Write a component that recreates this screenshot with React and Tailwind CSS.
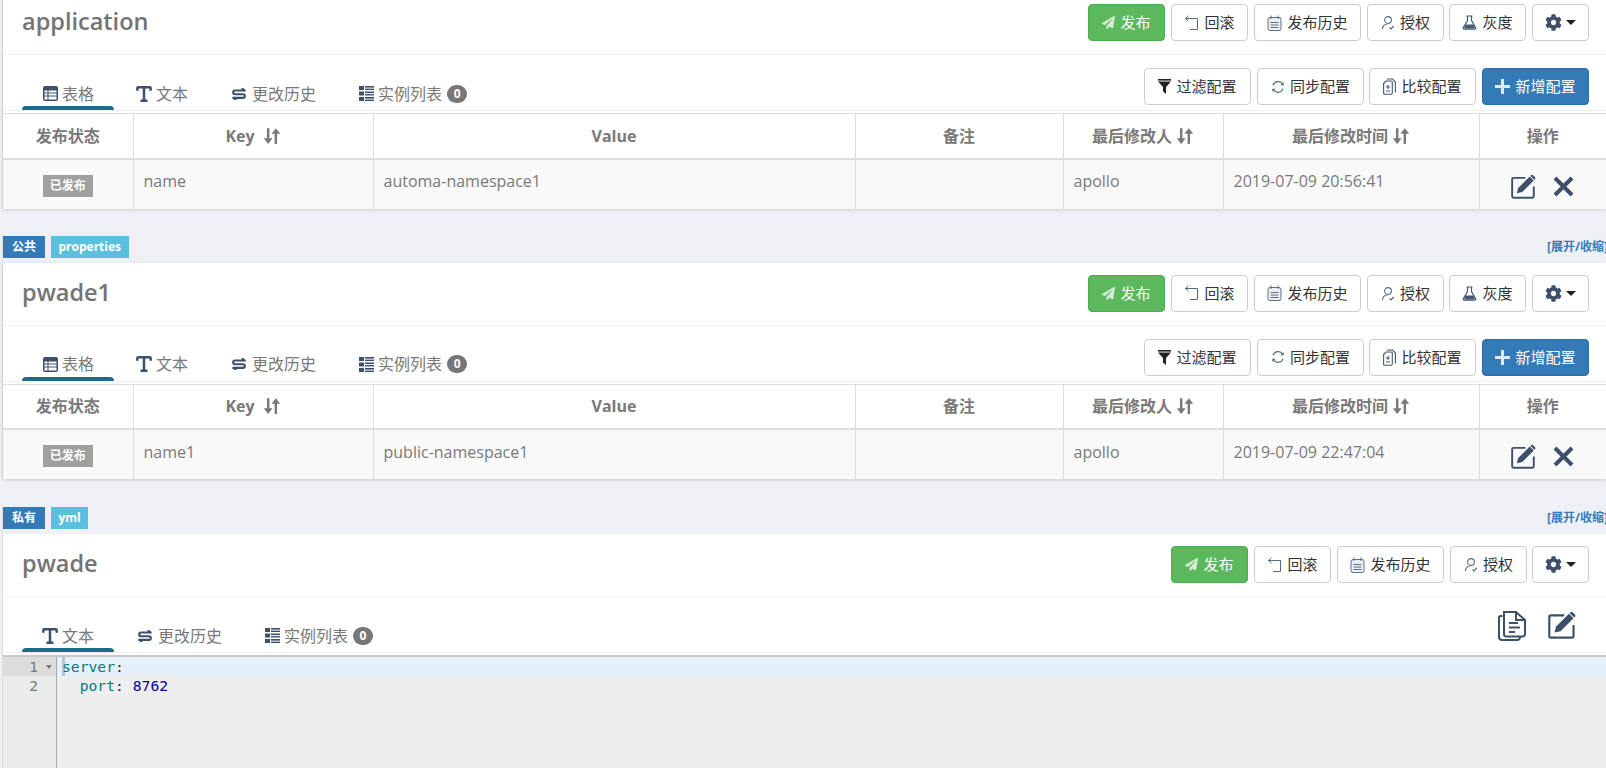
import { FaPaperPlane, FaCog } from 'react-icons/fa';
import { Type } from 'lucide-react';

// Bootstrap 3 glyphs that the icon packages don't carry in the same shape
const RollbackIcon = () => (
  <svg width="15" height="16" viewBox="0 0 15 16" fill="none" stroke="#55697f" strokeWidth="1">
    <path d="M1.5 3.500H13.500V14.500H6" />
    <path d="M4.500 .8L1.500 3.500L4.500 6.200" />
  </svg>
);

const HistoryIcon = () => (
  <svg width="15" height="16" viewBox="0 0 15 16" fill="#edf0f4" stroke="#5d6f84" strokeWidth="1">
    <rect x="1" y="2.500" width="13" height="13" rx="2" />
    <path d="M4 .5V4M11 .5V4M3.500 7.500H11.500M3.500 10H11.500M3.500 12.500H11.500" fill="none" />
  </svg>
);

const AuthIcon = () => (
  <svg width="14" height="15" viewBox="0 0 14 15" fill="none" stroke="#55697f" strokeWidth="1.100">
    <circle cx="7" cy="5" r="3.400" />
    <path d="M1.500 14C1.500 11 3.500 9 6.500 9" />
    <path d="M8.500 12.500L10 14L12.800 11" />
  </svg>
);

const FlaskIcon = () => (
  <svg width="15" height="15" viewBox="0 0 15 15" fill="none" stroke="#45586f" strokeWidth="1.200">
    <path d="M4.500 1H10.500M5.500 1V5.500L1.400 12.500C1 13.400 1.400 14.200 2.400 14.200H12.600C13.600 14.200 14 13.400 13.600 12.500L9.500 5.500V1" />
    <path d="M3.500 9.500H11.500L13 13.500H2Z" fill="#45586f" stroke="none" />
  </svg>
);

const FilterIcon = () => (
  <svg width="13" height="15" viewBox="0 0 13 15" fill="#222">
    <rect x="0" y="0" width="13" height="1.600" />
    <path d="M0 2.600H13L8 8V15L5 12.500V8Z" />
  </svg>
);

const SyncIcon = () => (
  <svg width="14" height="14" viewBox="0 0 14 14" fill="none" stroke="#5d6f84" strokeWidth="1.100">
    <path d="M2 5.200A5.400 5.400 0 0 1 11.800 4.400" />
    <path d="M12 8.800A5.400 5.400 0 0 1 2.200 9.600" />
    <path d="M10 4.600H12.200V2.400" />
    <path d="M4 9.400H1.800V11.600" />
  </svg>
);

const CompareIcon = () => (
  <svg width="13" height="17" viewBox="0 0 13 17" fill="none" stroke="#45586f" strokeWidth="1.100">
    <path d="M4 1H9.500L12.400 4V14.500" />
    <path d="M.6 5.500L3 3H8.200C8.800 3 9.300 3.500 9.300 4V15C9.300 15.600 8.800 16.200 8.200 16.200H1.700C1 16.200 .6 15.600 .6 15Z" fill="#fff" />
    <path d="M5 7V11M3 9H7M3 13H7" />
  </svg>
);

const PlusIcon = () => (
  <svg width="15" height="15" viewBox="0 0 15 15" fill="#dfe9f3">
    <rect x="6" y="0" width="3" height="15" />
    <rect x="0" y="6" width="15" height="3" />
  </svg>
);

const TableIcon = () => (
  <svg width="15" height="15" viewBox="0 0 15 15" fill="#3e5069">
    <path d="M2 0H13A2 2 0 0 1 15 2V13A2 2 0 0 1 13 15H2A2 2 0 0 1 0 13V2A2 2 0 0 1 2 0Z" />
    <path d="M1.500 4.500H4.500V6.500H1.500ZM5.500 4.500H13.500V6.500H5.500ZM1.500 7.500H4.500V9.500H1.500ZM5.500 7.500H13.500V9.500H5.500ZM1.500 10.500H4.500V13.500H1.500ZM5.500 10.500H13.500V13.500H5.500Z" fill="#fff" />
  </svg>
);

const TransferIcon = () => (
  <svg width="14" height="12" viewBox="0 0 14 12" fill="none" stroke="#3e5069" strokeWidth="2.100" strokeLinecap="round">
    <path d="M12.500 2.500H3A1.800 1.800 0 0 0 3 6.200H11A1.800 1.800 0 0 1 11 9.900H1.500" />
    <path d="M10.500 .8L12.500 2.500M3.500 11.400L1.500 9.900" />
  </svg>
);

const InstanceIcon = () => (
  <svg width="15" height="15" viewBox="0 0 15 15" fill="#3e5069">
    <rect x="0" y="0" width="5" height="4" />
    <rect x="0" y="5.500" width="5" height="4" />
    <rect x="0" y="11" width="5" height="4" />
    <rect x="6" y="0" width="9" height="1.600" />
    <rect x="6" y="2.600" width="9" height="1.400" />
    <rect x="6" y="5.500" width="9" height="1.600" />
    <rect x="6" y="8.100" width="9" height="1.400" />
    <rect x="6" y="11" width="9" height="1.600" />
    <rect x="6" y="13.600" width="9" height="1.400" />
  </svg>
);

const SortIcon = () => (
  <svg width="18" height="18" viewBox="0 0 16 16" fill="#797979">
    <path d="M3.500 1H5.700V10H8.500L4.600 15L.7 10H3.500Z" />
    <path d="M10.300 15H12.500V6H15.300L11.400 1L7.500 6H10.300Z" />
  </svg>
);

const EditIcon = ({ size = 25 }) => (
  <svg width={size} height={size} viewBox="0 0 26 26" fill="none">
    <path d="M23.700 13V23.200C23.700 24 23.200 24.700 22.400 24.700H2.600C1.800 24.700 1.200 24 1.200 23.200V5.400C1.200 4.600 1.800 4 2.600 4H15" stroke="#3e5069" strokeWidth="2" />
    <path d="M6 20L7.500 14.500L19.500 2.500L23.700 6.700L11.700 18.700Z" fill="#3e5069" />
    <path d="M20.700 1.300C21.400 .6 22.300 .6 23 1.300L25 3.300C25.600 4 25.600 4.800 25 5.500L24.400 6L20 1.800Z" fill="#3e5069" />
  </svg>
);

const RemoveIcon = () => (
  <svg width="21" height="21" viewBox="0 0 21 21" stroke="#3e5069" strokeWidth="4" fill="none">
    <path d="M2 2L19 19M19 2L2 19" />
  </svg>
);

const FilesIcon = () => (
  <svg width="28" height="30" viewBox="0 0 28 30" fill="none" stroke="#3e5069" strokeWidth="2">
    <path d="M4.500 5H3A2 2 0 0 0 1 7V26A3 3 0 0 0 4 29H19A3 3 0 0 0 22 26V25.500" />
    <path d="M6 1H18L27 9V23A2.500 2.500 0 0 1 24.500 25.500H8.500A2.500 2.500 0 0 1 6 23Z" />
    <path d="M18 1V9H27" />
    <path d="M11 12H20M11 16.500H22M11 21H17" strokeWidth="1.800" />
  </svg>
);

const Btn = ({ icon, children, className }) => (
  <button className={`h-[37px] flex items-center justify-center gap-[5px] rounded border text-[15px] ${className}`}>
    {icon}
    <span>{children}</span>
  </button>
);

const plain = 'border-[#ccc] bg-white text-[#333]';

function PanelHeader({ title, gray }) {
  return (
    <div className="h-[63px] pt-3 pl-[19px] pr-[17px] flex justify-between border-b border-[#f0f1f6]">
      <div className="text-[23.5px] font-semibold text-[#747474] leading-[34px]">{title}</div>
      <div className="flex gap-1.5">
        <Btn
          className="w-[77px] bg-[#5cb85c] border-[#4cae4c] text-white"
          icon={<FaPaperPlane className="text-[13px] text-[#d5ecd5]" />}
        >
          发布
        </Btn>
        <Btn className={`w-[77px] ${plain}`} icon={<RollbackIcon />}>回滚</Btn>
        <Btn className={`w-[107px] ${plain}`} icon={<HistoryIcon />}>发布历史</Btn>
        <Btn className={`w-[77px] ${plain}`} icon={<AuthIcon />}>授权</Btn>
        {gray && <Btn className={`w-[77px] -ml-px ${plain}`} icon={<FlaskIcon />}>灰度</Btn>}
        <button className={`h-[37px] w-[57px] flex items-center justify-center gap-1 rounded border ${gray ? '' : '-ml-px'} ${plain}`}>
          <FaCog className="text-[17px] text-[#3e5069]" />
          <span className="w-0 h-0 border-x-[5px] border-x-transparent border-t-[5px] border-t-[#222]" />
        </button>
      </div>
    </div>
  );
}

// icons sit in a fixed box so the tab widths stay the same whatever the glyph is
const Tab = ({ icon, children, active, badge, wideIcon }) => (
  <div className="relative mr-0.5 px-5 h-[33px] flex items-center gap-1 text-base text-[#797979]">
    <span className={`h-4 flex items-center justify-center ${wideIcon ? 'w-[18px]' : 'w-4'}`}>{icon}</span>
    <span>{children}</span>
    {badge && (
      <span className="ml-px w-5 h-[18px] rounded-full bg-[#777] text-white text-xs font-bold flex items-center justify-center">
        0
      </span>
    )}
    {active && (
      <span className="absolute left-0 right-0 bottom-0 h-1 bg-[#1a6d87] rounded-t-sm" />
    )}
  </div>
);

const TextIcon = () => <Type size={20} strokeWidth={3} color="#3e5069" className="shrink-0" />;

function Tabs({ withTable }) {
  return (
    <div className="flex items-end pl-[19px]">
      {withTable && <Tab active icon={<TableIcon />}>表格</Tab>}
      <Tab active={!withTable} icon={<TextIcon />}>文本</Tab>
      <Tab wideIcon icon={<TransferIcon />}>更改历史</Tab>
      <Tab icon={<InstanceIcon />} badge>实例列表</Tab>
    </div>
  );
}

const Th = ({ children, sort, sortGap }) => (
  <th className="border-r border-b-2 border-[#ddd] font-bold text-base text-[#797979] text-center last:border-r-0">
    <span className={`inline-flex items-center justify-center ${sortGap ? 'gap-2' : 'gap-1'}`}>
      {children}
      {sort && <SortIcon />}
    </span>
  </th>
);

const Td = ({ children, className }) => (
  <td className={`border-r border-[#ddd] px-2.5 text-base text-[#797979] last:border-r-0 ${className || ''}`}>{children}</td>
);

function ConfigTable({ name, value, time }) {
  return (
    <table className="w-full table-fixed border-collapse border-t border-[#ddd] bg-white">
      <colgroup>
        <col className="w-[130px]" />
        <col className="w-[240px]" />
        <col className="w-[482px]" />
        <col className="w-[208px]" />
        <col className="w-[160px]" />
        <col className="w-[256px]" />
        <col />
      </colgroup>
      <thead>
        <tr className="h-[45px]">
          <Th>发布状态</Th>
          <Th sort sortGap>Key</Th>
          <Th>Value</Th>
          <Th>备注</Th>
          <Th sort>最后修改人</Th>
          <Th sort>最后修改时间</Th>
          <Th>操作</Th>
        </tr>
      </thead>
      <tbody>
        <tr className="h-[50px] bg-[#f9f9f9]">
          <Td className="text-center">
            <span className="inline-flex items-center justify-center w-[50px] h-[22px] bg-[#a0a0a0] text-white text-xs font-bold">
              已发布
            </span>
          </Td>
          <Td className="pb-1.5">{name}</Td>
          <Td className="pb-1.5">{value}</Td>
          <Td />
          <Td className="pb-1.5">apollo</Td>
          <Td className="pb-1.5">{time}</Td>
          <Td>
            <div className="flex items-center justify-center gap-[17px] pt-1">
              <EditIcon />
              <RemoveIcon />
            </div>
          </Td>
        </tr>
      </tbody>
    </table>
  );
}

function TableToolbar() {
  return (
    <div className="flex gap-1.5 pt-[13px] h-[50px]">
      <Btn className={`w-[107px] ${plain}`} icon={<FilterIcon />}>过滤配置</Btn>
      <Btn className={`w-[107px] ${plain}`} icon={<SyncIcon />}>同步配置</Btn>
      <Btn className={`w-[107px] -ml-px ${plain}`} icon={<CompareIcon />}>比较配置</Btn>
      <Btn className="w-[107px] bg-[#337ab7] border-[#2e6da4] text-white" icon={<PlusIcon />}>新增配置</Btn>
    </div>
  );
}

function PanelLabels({ scope, format }) {
  return (
    <div className="h-[29px] pt-0.5 flex justify-between">
      <div className="flex gap-1.5 h-[22px] text-xs font-bold text-white">
        <span className="w-[42px] flex items-center justify-center bg-[#337ab7]">{scope}</span>
        <span className="px-[7.5px] flex items-center bg-[#5bc0de]">{format}</span>
      </div>
      <div className="w-[59px] overflow-hidden whitespace-nowrap text-xs font-bold text-[#337ab7] leading-[22px]">
        [展开/收缩]
      </div>
    </div>
  );
}

function TablePanel({ title, name, value, time }) {
  return (
    <div className="bg-white shadow-[0_1px_3px_rgba(0,0,0,0.15)]">
      <PanelHeader title={title} gray />
      <div className="h-[56px] pr-[17px] flex justify-between border-b border-[#eeeff3]">
        <Tabs withTable />
        <TableToolbar />
      </div>
      <div className="pt-0.5">
        <ConfigTable name={name} value={value} time={time} />
      </div>
    </div>
  );
}

export default function App() {
  return (
    <div
      className="w-[1606px] h-[768px] overflow-hidden bg-[#eff0f5]"
      style={{ fontFamily: '"Open Sans", "Noto Sans CJK SC", sans-serif' }}
    >
      <div className="-mt-2 ml-0.5 border-l border-[#dedede]">
        <TablePanel title="application" name="name" value="automa-namespace1" time="2019-07-09 20:56:41" />
      </div>

      <div className="mt-[25px] ml-0.5 border-l border-[#dedede]">
        <PanelLabels scope="公共" format="properties" />
        <TablePanel title="pwade1" name="name1" value="public-namespace1" time="2019-07-09 22:47:04" />
      </div>

      <div className="mt-[26px] ml-0.5 border-l border-[#dedede]">
        <PanelLabels scope="私有" format="yml" />
        <div className="bg-white">
          <PanelHeader title="pwade" />
          <div className="h-[56px] pr-[30px] flex justify-between border-b border-[#eeeff3]">
            <Tabs />
            <div className="flex gap-[22px] pt-3.5">
              <FilesIcon />
              <EditIcon size={28} />
            </div>
          </div>
          <div className="mt-0.5 h-[200px] flex border-t-2 border-[#c8c8c8] bg-[#eee] font-['DejaVu_Sans_Mono',monospace] text-[14.7px] leading-[19px]">
            <div className="w-[54px] shrink-0 bg-[#ebebeb] border-r border-[#aaa] text-[#797979]">
              <div className="relative h-[19px] bg-[#dcdcdc] text-right pr-[18px]">
                1
                <span className="absolute right-1 top-2 w-0 h-0 border-x-[3px] border-x-transparent border-t-4 border-t-[#777]" />
              </div>
              <div className="h-[19px] text-right pr-[18px]">2</div>
            </div>
            <div className="flex-1 pl-[5px]">
              <div className="relative -ml-[5px] pl-[5px] h-[19px] bg-[#e6f0fb] whitespace-pre">
                <span className="absolute left-[5px] top-0 w-[3px] h-[19px] bg-[#b4c4d4]" />
                <span className="relative text-[#007a85]">server</span>
                <span className="relative text-[#333]">:</span>
              </div>
              <div className="h-[19px] whitespace-pre">
                <span>  </span>
                <span className="text-[#007a85]">port</span>
                <span className="text-[#333]">: </span>
                <span className="text-[#0000a8]">8762</span>
              </div>
            </div>
          </div>
        </div>
      </div>
    </div>
  );
}
